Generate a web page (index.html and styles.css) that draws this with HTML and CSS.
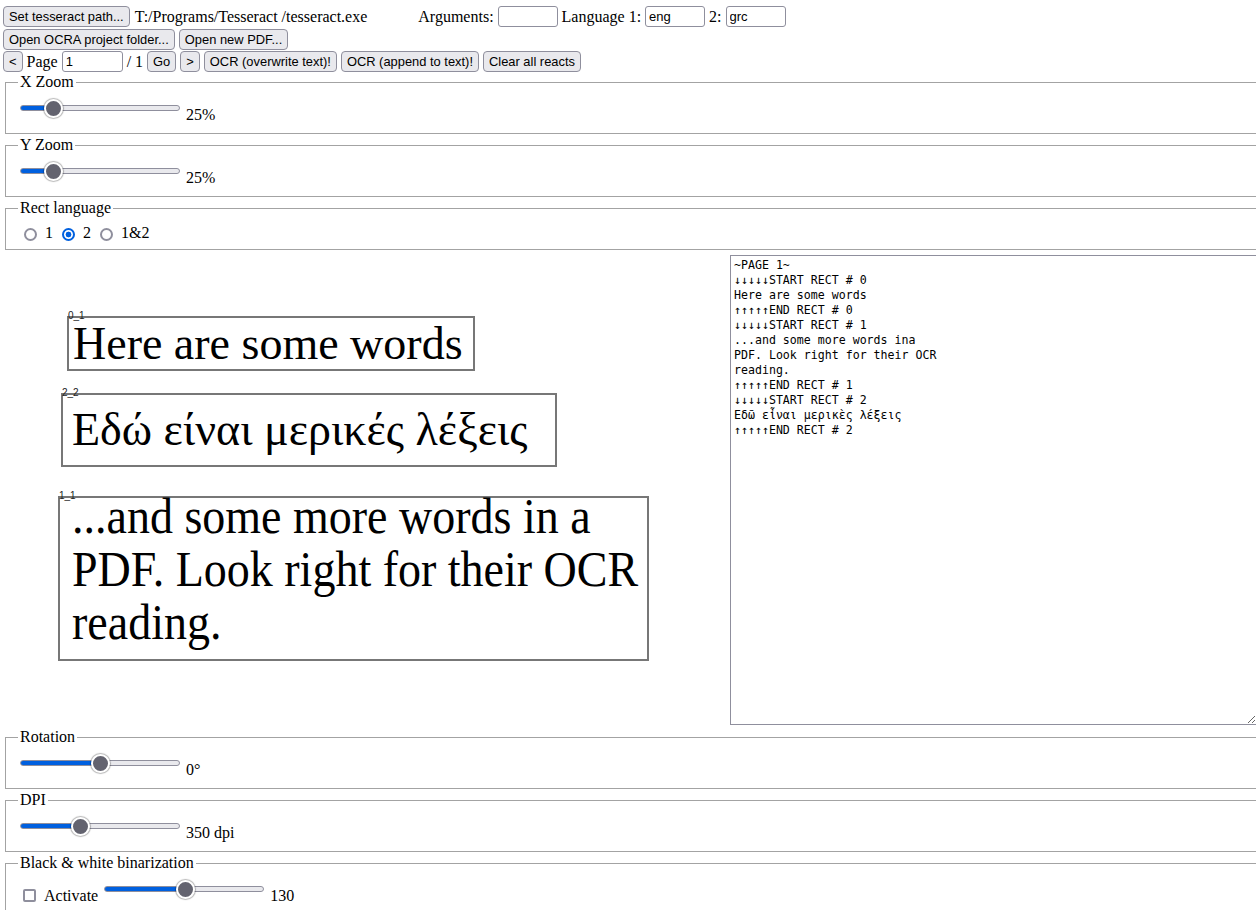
FILE: index.html
```html
<!DOCTYPE html>
<html lang="en">
<head>
<meta charset="utf-8">
<title>OCRA</title>
<link rel="stylesheet" href="styles.css">
</head>
<body>
<div class="app">
  <div class="toolbar">
    <div class="row row-first">
      <button class="btn">Set tesseract path...</button>
      <span class="path">T:/Programs/Tesseract /tesseract.exe</span>
      <span class="args">Arguments:</span>
      <input class="field" type="text" value="">
      <span>Language 1:</span>
      <input class="field" type="text" value="eng">
      <span>2:</span>
      <input class="field" type="text" value="grc">
    </div>
    <div class="row">
      <button class="btn">Open OCRA project folder...</button>
      <button class="btn">Open new PDF...</button>
    </div>
    <div class="row">
      <button class="btn">&lt;</button>
      <span>Page</span>
      <input class="field field-page" type="text" value="1">
      <span>/ 1</span>
      <button class="btn">Go</button>
      <button class="btn">&gt;</button>
      <button class="btn">OCR (overwrite text)!</button>
      <button class="btn">OCR (append to text)!</button>
      <button class="btn">Clear all reacts</button>
    </div>
  </div>

  <fieldset class="panel panel-first">
    <legend>X Zoom</legend>
    <div class="ctl-row">
      <input class="slider" type="range" min="10" max="100" value="25" style="--fill: 21%">
      <span class="val">25%</span>
    </div>
  </fieldset>

  <fieldset class="panel">
    <legend>Y Zoom</legend>
    <div class="ctl-row">
      <input class="slider" type="range" min="10" max="100" value="25" style="--fill: 21%">
      <span class="val">25%</span>
    </div>
  </fieldset>

  <fieldset class="panel panel-radios">
    <legend>Rect language</legend>
    <div class="radio-row">
      <input class="radio" type="radio" name="lang"><span class="opt">1</span>
      <input class="radio" type="radio" name="lang" checked><span class="opt">2</span>
      <input class="radio" type="radio" name="lang"><span class="opt">1&amp;2</span>
    </div>
  </fieldset>

  <div class="workspace">
    <div class="canvas">
      <div class="rect rect-a">
        <span class="rect-label">0_1</span>
        <div class="rect-text">Here are some words</div>
      </div>
      <div class="rect rect-b">
        <span class="rect-label">2_2</span>
        <div class="rect-text">Εδώ είναι μερικές λέξεις</div>
      </div>
      <div class="rect rect-c">
        <span class="rect-label">1_1</span>
        <div class="rect-text rect-text-multi">...and some more words in a<br>PDF. Look right for their OCR<br>reading.</div>
      </div>
    </div>
    <textarea class="output" spellcheck="false">~PAGE 1~
↓↓↓↓↓START RECT # 0
Here are some words
↑↑↑↑↑END RECT # 0
↓↓↓↓↓START RECT # 1
...and some more words ina
PDF. Look right for their OCR
reading.
↑↑↑↑↑END RECT # 1
↓↓↓↓↓START RECT # 2
Εδῶ εἶναι μερικὲς λέξεις
↑↑↑↑↑END RECT # 2</textarea>
  </div>

  <fieldset class="panel">
    <legend>Rotation</legend>
    <div class="ctl-row">
      <input class="slider" type="range" min="-180" max="180" value="0" style="--fill: 50%">
      <span class="val">0°</span>
    </div>
  </fieldset>

  <fieldset class="panel">
    <legend>DPI</legend>
    <div class="ctl-row">
      <input class="slider" type="range" min="100" max="800" value="350" style="--fill: 37.5%">
      <span class="val">350 dpi</span>
    </div>
  </fieldset>

  <fieldset class="panel">
    <legend>Black &amp; white binarization</legend>
    <div class="ctl-row">
      <input class="check" type="checkbox">
      <span class="val val-label">Activate</span>
      <input class="slider" type="range" min="0" max="255" value="130" style="--fill: 50%">
      <span class="val">130</span>
    </div>
  </fieldset>
</div>
</body>
</html>
```

FILE: styles.css
```css
html, body {
  margin: 0;
  padding: 0;
  overflow: hidden;
  background: #ffffff;
}

body {
  font-family: "Liberation Serif", "Times New Roman", serif;
  font-size: 16px;
  color: #000000;
}

.app {
  padding: 6px 0 0 3px;
}

/* ---------- toolbar ---------- */
.toolbar {
  display: flex;
  flex-direction: column;
  gap: 1px;
}

.row {
  display: flex;
  align-items: center;
  gap: 4px;
  height: 21px;
  white-space: nowrap;
}

.row-first {
  margin-bottom: 1px;
}

.btn {
  font-family: "Liberation Sans", Arial, sans-serif;
  font-size: 12.9px;
  height: 21px;
  margin: 0;
  padding: 0 5px;
  box-sizing: border-box;
  border: 1px solid #8f8f9d;
  border-radius: 4px;
  background: #e9e9ed;
  color: #000000;
  line-height: 19px;
}

.field {
  font-family: "Liberation Sans", Arial, sans-serif;
  font-size: 13px;
  width: 60px;
  height: 21px;
  margin: 0;
  padding: 0 3px;
  box-sizing: border-box;
  border: 1px solid #8f8f9d;
  border-radius: 3px;
  background: #ffffff;
  color: #000000;
}

.field-page {
  width: 61px;
}

.path {
  margin-left: 1px;
}

.args {
  margin-left: 47px;
}

/* ---------- fieldsets ---------- */
.panel {
  width: 1400px;
  margin: 0 2px 2px;
  padding: 6px 12px 10px;
  border: 1px solid #a3a3a3;
  box-sizing: border-box;
}

.panel-first {
  margin-top: 1px;
}

.panel legend {
  padding: 0 2px;
  line-height: 18px;
}

.panel-radios {
  padding-bottom: 7px;
}

.ctl-row {
  display: flex;
  align-items: flex-start;
  height: 26px;
  white-space: nowrap;
}

.val {
  margin-top: 9px;
  margin-left: 4px;
  line-height: 18px;
}

.val-label {
  margin-left: 0;
  margin-right: 4px;
}

.radio-row {
  display: flex;
  align-items: flex-start;
  height: 19px;
  white-space: nowrap;
}

.opt {
  margin-top: 1px;
  margin-right: 4px;
  line-height: 18px;
}

/* ---------- range ---------- */
.slider {
  -webkit-appearance: none;
  appearance: none;
  width: 160px;
  height: 16px;
  margin: 3px 2px 0;
  padding: 0;
  background: transparent;
}

.slider::-webkit-slider-runnable-track {
  height: 6px;
  box-sizing: border-box;
  border: 1px solid #8f8f9d;
  border-radius: 4px;
  background: linear-gradient(to right, #0060df var(--fill), #e9e9ed var(--fill));
}

.slider::-webkit-slider-thumb {
  -webkit-appearance: none;
  appearance: none;
  width: 19px;
  height: 19px;
  margin-top: -7.5px;
  box-sizing: border-box;
  border: 2px solid #ffffff;
  border-radius: 50%;
  background: #63636f;
  box-shadow: 0 0 1px 1px rgba(0, 0, 0, 0.28);
}

/* ---------- radio / checkbox ---------- */
.radio {
  -webkit-appearance: none;
  appearance: none;
  width: 13px;
  height: 13px;
  margin: 5px 8px 0 5px;
  box-sizing: border-box;
  border: 2px solid #8f8f9d;
  border-radius: 50%;
  background: #ffffff;
}

.radio:first-child {
  margin-left: 6px;
}

.radio:checked {
  border-color: #0060df;
  background: radial-gradient(circle, #0060df 0 2.6px, #ffffff 3.2px);
}

.check {
  -webkit-appearance: none;
  appearance: none;
  width: 13px;
  height: 13px;
  margin: 11px 8px 0 5px;
  box-sizing: border-box;
  border: 2px solid #8f8f9d;
  border-radius: 2px;
  background: #ffffff;
}

/* ---------- workspace ---------- */
.workspace {
  display: flex;
  height: 476px;
}

.canvas {
  position: relative;
  flex: 0 0 727px;
  height: 100%;
}

.rect {
  position: absolute;
  box-sizing: border-box;
  border: 2px solid #777777;
  display: flex;
  align-items: center;
  overflow: visible;
}

.rect-a {
  left: 64px;
  top: 64px;
  width: 408px;
  height: 55px;
  padding-left: 4px;
}

.rect-b {
  left: 58px;
  top: 141px;
  width: 496px;
  height: 74px;
  padding-left: 9px;
}

.rect-c {
  left: 55px;
  top: 244px;
  width: 591px;
  height: 165px;
  padding-left: 13px;
  align-items: flex-start;
}

.rect-label {
  position: absolute;
  left: -1px;
  bottom: 100%;
  margin-bottom: -3px;
  font-family: "Liberation Sans", Arial, sans-serif;
  font-size: 10px;
  line-height: 10px;
  color: #222222;
}

.rect-text {
  font-family: "Liberation Serif", "Times New Roman", serif;
  font-size: 46px;
  line-height: 1;
  white-space: nowrap;
  color: #000000;
}

.rect-text-multi {
  font-size: 50px;
  line-height: 53px;
  margin-top: -8px;
  margin-left: -1px;
  transform: scaleX(0.92);
  transform-origin: left top;
}

.output {
  flex: 0 0 527px;
  width: 527px;
  height: 470px;
  margin: 3px 0 0 0;
  padding: 2px 3px;
  box-sizing: border-box;
  border: 1px solid #8f8f9d;
  font-family: "DejaVu Sans Mono", "Liberation Mono", monospace;
  font-size: 11.6px;
  line-height: 15px;
  color: #000000;
  background: #ffffff;
  resize: both;
}
```
